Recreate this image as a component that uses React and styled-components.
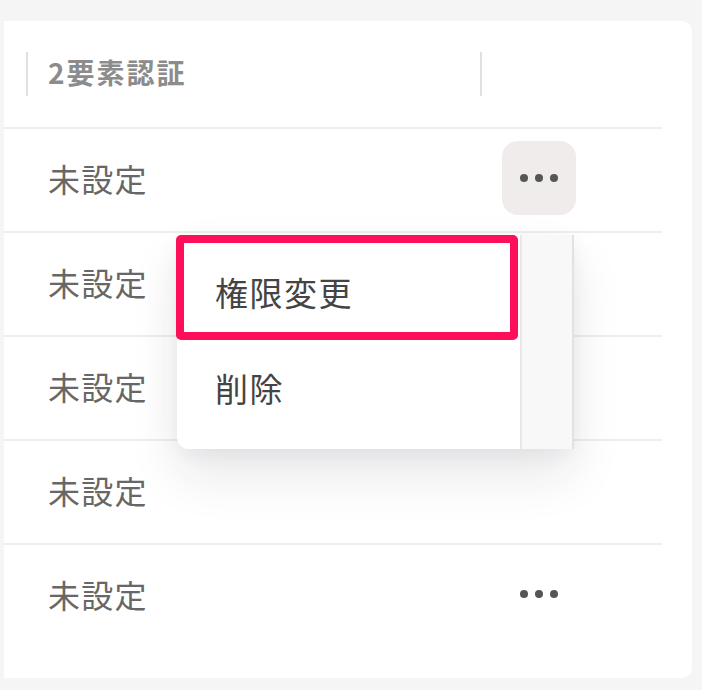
import React from 'react'
import styled, { createGlobalStyle } from 'styled-components'

const GlobalStyle = createGlobalStyle`
  html, body {
    margin: 0;
    background: #f5f5f6;
    font-family: 'Noto Sans CJK JP', 'Noto Sans', sans-serif;
  }
`

const Page = styled.div`
  box-sizing: border-box;
  height: 690px;
  padding: 21px 10px 12px 4px;
`

const Card = styled.div`
  position: relative;
  box-sizing: border-box;
  height: 100%;
  background: #ffffff;
  border-radius: 0 10px 10px 0;
  padding-right: 30px;
`

const Row = styled.div`
  display: grid;
  grid-template-columns: 22px 454px 1fr;
  box-sizing: border-box;
  height: ${props => (props.$header ? '108px' : '104px')};
  border-bottom: 2px solid ${props => (props.$last ? 'transparent' : '#eeeeee')};
`

const HeaderCell = styled.div`
  display: flex;
  align-items: center;
  gap: 20px;
  padding-bottom: 4px;
  font-size: 28px;
  font-weight: 700;
  letter-spacing: 2px;
  color: #8c8c8c;
`

const Divider = styled.span`
  width: 2px;
  height: 44px;
  margin-top: 4px;
  background: #e0e0e0;
`

const Cell = styled.div`
  display: flex;
  align-items: center;
  padding: 0 0 4px 22px;
  font-size: 32px;
  letter-spacing: 1.2px;
  color: #676767;
`

const DotsButton = styled.button`
  display: flex;
  align-items: center;
  justify-content: center;
  gap: 7px;
  width: 74px;
  height: 74px;
  padding: 0;
  border: none;
  border-radius: 16px;
  background: ${props => (props.$open ? '#efeceb' : 'transparent')};
  cursor: pointer;
`

const Dot = styled.span`
  width: 8px;
  height: 8px;
  border-radius: 50%;
  background: #555555;
`

const Menu = styled.div`
  position: absolute;
  left: 173px;
  top: 214px;
  display: flex;
  height: 214px;
  box-shadow: 0 26px 50px rgba(30, 30, 50, 0.1), 0 6px 18px rgba(30, 30, 50, 0.05);
  border-radius: 0 0 12px 12px;
`

const MenuBody = styled.div`
  display: flex;
  flex-direction: column;
  width: 343px;
  background: #ffffff;
  border-radius: 0 0 12px 12px;
`

const MenuItem = styled.div`
  display: flex;
  align-items: center;
  box-sizing: border-box;
  height: ${props => props.$height}px;
  margin: 0 2px 0 -1px;
  padding: ${props => (props.$outlined ? '8px' : '0')} 0 0 31px;
  border: 8px solid ${props => (props.$outlined ? '#ff0f5a' : 'transparent')};
  border-radius: 5px;
  font-size: 33px;
  letter-spacing: 1.5px;
  color: #444444;
`

const Track = styled.div`
  box-sizing: border-box;
  width: 54px;
  background: #f8f8f9;
  border-left: 2px solid #e8e8e8;
  border-right: 2px solid #e2e2e2;
`

const rows = ['未設定', '未設定', '未設定', '未設定', '未設定']

const Dots = ({ open }) => (
  <DotsButton $open={open}>
    <Dot />
    <Dot />
    <Dot />
  </DotsButton>
)

export default function App() {
  return (
    <Page>
      <GlobalStyle />
      <Card>
        <Row $header>
          <div />
          <HeaderCell>
            <Divider />
            2要素認証
          </HeaderCell>
          <HeaderCell>
            <Divider />
          </HeaderCell>
        </Row>
        {rows.map((value, i) => (
          <Row key={i} $last={i === rows.length - 1}>
            <div />
            <Cell>{value}</Cell>
            <Cell>{i === 0 ? <Dots open /> : i === rows.length - 1 ? <Dots /> : null}</Cell>
          </Row>
        ))}
        <Menu>
          <MenuBody>
            <MenuItem $outlined $height={105}>権限変更</MenuItem>
            <MenuItem $height={96}>削除</MenuItem>
          </MenuBody>
          <Track />
        </Menu>
      </Card>
    </Page>
  )
}
